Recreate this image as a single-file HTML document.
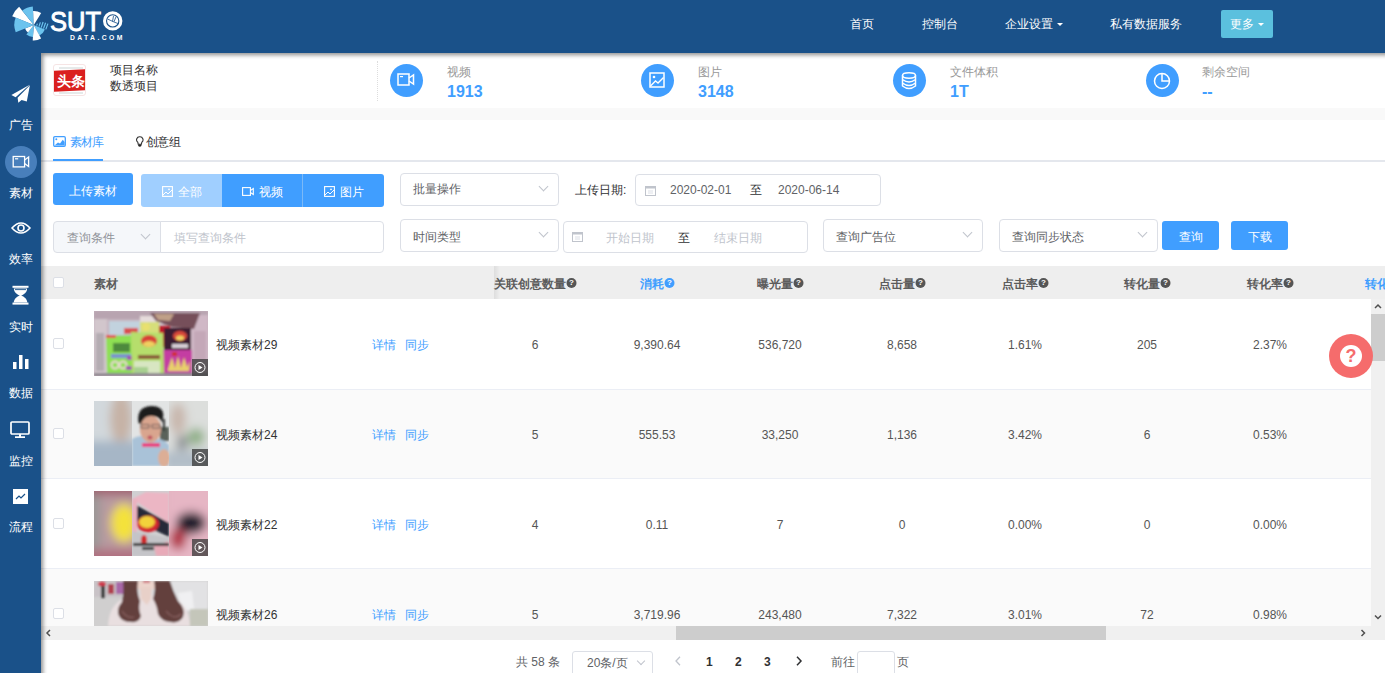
<!DOCTYPE html>
<html><head><meta charset="utf-8">
<style>
*{margin:0;padding:0;box-sizing:border-box}
html,body{width:1385px;height:673px;overflow:hidden;background:#fff;font-family:"Liberation Sans",sans-serif;font-size:12px;color:#606266}
.abs{position:absolute}
#hdr{position:absolute;left:0;top:0;width:1385px;height:53px;background:#1a5189;z-index:5}
#side{position:absolute;left:0;top:53px;width:41px;height:620px;background:#1a5189;z-index:4}
#shade{position:absolute;left:41px;top:53px;width:1364px;height:640px;z-index:20;pointer-events:none;box-shadow:inset 2px 2px 4px rgba(0,0,0,.45)}
.nav{position:absolute;top:16px;color:#fff;font-size:12px;line-height:16px;white-space:nowrap}
.caret{display:inline-block;width:0;height:0;border-left:3px solid transparent;border-right:3px solid transparent;border-top:3px solid #fff;vertical-align:middle;margin-left:4px}
.sitem{position:absolute;left:0;width:41px;text-align:center;color:#fff;font-size:12px;line-height:14px}
.txt{position:absolute;white-space:nowrap;line-height:14px}
.circ{position:absolute;width:33px;height:33px;border-radius:50%;background:#409eff}
.stl{position:absolute;color:#999;font-size:12px;line-height:14px;white-space:nowrap}
.stv{position:absolute;margin-top:1px;color:#409eff;font-size:16px;font-weight:bold;line-height:18px;white-space:nowrap}
.btn{position:absolute;background:#409eff;color:#fff;text-align:center;white-space:nowrap;font-size:12px}
.sel{position:absolute;border:1px solid #dcdfe6;border-radius:4px;background:#fff;color:#606266;white-space:nowrap}
.sel .t{position:absolute;left:12px;top:8px;line-height:14px}
.arr{position:absolute;width:7px;height:7px;border-right:1px solid #c0c4cc;border-bottom:1px solid #c0c4cc;transform:rotate(45deg)}
.th{position:absolute;top:277px;font-weight:bold;color:#5c5c5c;line-height:14px;white-space:nowrap;transform:translateX(-50%)}
.q{display:inline-block;width:10px;height:10px;border-radius:50%;background:#555;color:#fff;font-size:8px;line-height:10px;text-align:center;vertical-align:top;margin-top:1px;margin-left:1px;font-weight:bold}
.td{position:absolute;color:#555;line-height:14px;white-space:nowrap;transform:translateX(-50%)}
.cb{position:absolute;left:53px;width:11px;height:11px;border:1px solid #dcdfe6;border-radius:2px;background:#fff}
.link{position:absolute;color:#409eff;line-height:14px;white-space:nowrap}
.name{position:absolute;left:216px;color:#333;line-height:14px;white-space:nowrap}
.play{position:absolute;width:16px;height:17px;background:rgba(60,60,60,.75)}
.play:after{content:"";position:absolute;left:3px;top:3px;width:9px;height:9px;border:1px solid #fff;border-radius:50%}
.play:before{content:"";position:absolute;left:7px;top:5.5px;border-left:4px solid #fff;border-top:3px solid transparent;border-bottom:3px solid transparent;z-index:1}
.thumb{position:absolute;width:114px;height:65px;overflow:hidden}
.thumb svg{display:block}
</style></head><body>
<div id="hdr">
  <svg class="abs" style="left:8px;top:4px" width="120" height="40" viewBox="0 0 120 40">
    <path d="M25.8 20.9 L4.2 12.2 A23.3 23.3 0 0 1 11.1 2.8 Z" fill="#fff"/>
    <path d="M25.8 20.9 L14.2 6.5 A18.5 18.5 0 0 1 24.8 2.4 Z" fill="#6cc3ee"/>
    <path d="M25.8 20.9 L25.1 6.9 A14 14 0 0 1 33.2 9.0 Z" fill="#fff"/>
    <path d="M25.8 20.9 L36.9 25.4 A12 12 0 0 1 31.4 31.5 Z" fill="#6cc3ee"/>
    <path d="M25.8 20.9 L33.1 34.6 A15.5 15.5 0 0 1 24.7 36.4 Z" fill="#fff"/>
    <path d="M25.8 20.9 L25.0 32.9 A12 12 0 0 1 18.4 30.4 Z" fill="#6cc3ee"/>
    <path d="M25.8 20.9 L20.0 28.4 A9.5 9.5 0 0 1 17.0 24.5 Z" fill="#fff"/>
    <path d="M25.8 20.9 L7.7 28.2 A19.5 19.5 0 0 1 7.7 13.6 Z" fill="#6cc3ee"/>
    <path d="M28.6 21.6 L29.4 19.6 M30.9 22.6 L32.4 18.4 M33.2 23.6 L35.1 18 M35.5 24.6 L37.6 18.8 M37.8 25.4 L39.9 19.6" stroke="#6cc3ee" stroke-width="1.2"/>
    <text x="42" y="26.8" fill="#fff" stroke="#fff" stroke-width="0.9" font-family="Liberation Sans" font-size="27.5" textLength="51" lengthAdjust="spacingAndGlyphs">SUT</text>
    <circle cx="104.7" cy="16.9" r="8.2" fill="none" stroke="#fff" stroke-width="3"/>
    <circle cx="104.7" cy="16.9" r="5.6" fill="#fff"/>
    <path d="M99.5 15 L106 18 L110 19.5 M104.5 17.5 L105.5 12 M106 17.8 L108 12.8" stroke="#1a5189" stroke-width="0.8" fill="none"/>
    <text x="62" y="36.1" fill="#fff" font-family="Liberation Sans" font-size="6.8" font-weight="bold" textLength="52.3" lengthAdjust="spacing">DATA.COM</text>
  </svg>
  <div class="nav" style="left:850px">首页</div>
  <div class="nav" style="left:922px">控制台</div>
  <div class="nav" style="left:1005px">企业设置<span class="caret"></span></div>
  <div class="nav" style="left:1110px">私有数据服务</div>
  <div class="abs" style="left:1221px;top:10px;width:52px;height:28px;background:#5bc0de;border-radius:2px"></div>
  <div class="nav" style="left:1230px">更多<span class="caret"></span></div>
</div>
<div id="side">
  <svg class="abs" style="left:10px;top:31px" width="21" height="20" viewBox="0 0 21 20"><path d="M19.7 0.8 L1.4 11 L5.6 13.2 Z" fill="#fff"/><path d="M7.6 13.8 L19.9 1.2 L16.8 17.6 L11.6 16 L8.3 18.7 Z" fill="#fff"/></svg>
  <div class="sitem" style="top:65px">广告</div>
  <div class="abs" style="left:4.5px;top:93px;width:32px;height:32px;border-radius:50%;background:#487fbb"></div>
  <svg class="abs" style="left:12px;top:102px" width="18" height="13" viewBox="0 0 18 13"><rect x="1.2" y="1.5" width="11.4" height="10.4" fill="none" stroke="#fff" stroke-width="1.3"/><path d="M12.6 5 L16.6 2 L16.6 11.4 L12.6 8.4" fill="none" stroke="#fff" stroke-width="1.3"/><rect x="3" y="3.2" width="3.2" height="1.2" fill="#fff"/></svg>
  <div class="sitem" style="top:133px">素材</div>
  <svg class="abs" style="left:11px;top:168px" width="20" height="14" viewBox="0 0 20 14"><path d="M1 7 Q10 -3 19 7 Q10 17 1 7 Z" fill="none" stroke="#fff" stroke-width="1.6"/><circle cx="10" cy="7" r="3" fill="none" stroke="#fff" stroke-width="1.6"/></svg>
  <div class="sitem" style="top:199px">效率</div>
  <svg class="abs" style="left:12px;top:232px" width="17" height="20" viewBox="0 0 17 20"><rect x="0.5" y="0.8" width="16" height="2" fill="#fff"/><rect x="0.5" y="17.6" width="16" height="2" fill="#fff"/><path d="M1.8 3.6 L15.2 3.6 Q15 8.5 8.5 11.2 Q2 8.5 1.8 3.6 Z" fill="#fff"/><path d="M8.5 10.2 Q2 12.5 1.6 17.6 L15.4 17.6 Q15 12.5 8.5 10.2 Z" fill="#fff"/><path d="M3 4.6 L14 4.6" stroke="#1a5189" stroke-width="0.9"/></svg>
  <div class="sitem" style="top:267px">实时</div>
  <svg class="abs" style="left:13px;top:302px" width="16" height="14" viewBox="0 0 16 14"><rect x="0" y="7" width="3.5" height="7" fill="#fff"/><rect x="6" y="0" width="3.5" height="14" fill="#fff"/><rect x="12" y="4" width="3.5" height="10" fill="#fff"/></svg>
  <div class="sitem" style="top:333px">数据</div>
  <svg class="abs" style="left:10px;top:368px" width="20" height="17" viewBox="0 0 20 17"><rect x="1" y="1" width="18" height="12" rx="1" fill="none" stroke="#fff" stroke-width="1.7"/><rect x="9" y="13" width="2" height="3" fill="#fff"/><rect x="5" y="15.3" width="10" height="1.7" fill="#fff"/></svg>
  <div class="sitem" style="top:401px">监控</div>
  <svg class="abs" style="left:13px;top:436px" width="15" height="15" viewBox="0 0 15 15"><rect x="0" y="0" width="15" height="15" fill="#fff"/><path d="M3 10 L6 7 L8 9 L12 5" fill="none" stroke="#1a5189" stroke-width="1.2"/></svg>
  <div class="sitem" style="top:467px">流程</div>
</div>

<!-- info bar -->
<div class="abs" style="left:53px;top:64px;width:33px;height:32px;border:1px solid #f6e4e4;border-radius:3px;background:#fff;overflow:hidden">
  <div class="abs" style="left:5px;top:2px;width:24px;height:2px;background:#e6eaea"></div>
  <div class="abs" style="left:-1px;top:5px;width:35px;height:21px;background:#da1f1f;transform:skewY(-2.5deg)"></div>
  <div class="abs" style="left:2px;top:8px;width:29px;color:#fff;font-weight:bold;font-size:14px;line-height:16px;text-align:center;letter-spacing:-0.5px">头条</div>
  <div class="abs" style="left:5px;top:27px;width:24px;height:2px;background:#e6eaea"></div>
</div>
<div class="txt" style="left:110px;top:63px;color:#333">项目名称</div>
<div class="txt" style="left:110px;top:79px;color:#333">数透项目</div>
<div class="abs" style="left:377px;top:61px;height:40px;border-left:1px dotted #ddd"></div>

<div class="circ" style="left:389.5px;top:63.8px"></div>
<svg class="abs" style="left:397px;top:73px" width="18" height="13" viewBox="0 0 18 13"><rect x="1" y="1" width="11" height="11" fill="none" stroke="#fff" stroke-width="1.5"/><path d="M12 5 L16.5 2 L16.5 11 L12 8" fill="none" stroke="#fff" stroke-width="1.5"/><rect x="3" y="3" width="3" height="1.2" fill="#fff"/></svg>
<div class="stl" style="left:447px;top:65px">视频</div>
<div class="stv" style="left:447px;top:82px">1913</div>

<div class="circ" style="left:641px;top:64px"></div>
<svg class="abs" style="left:649px;top:72px" width="16" height="16" viewBox="0 0 16 16"><rect x="1" y="1" width="14" height="14" fill="none" stroke="#fff" stroke-width="1.5"/><circle cx="5" cy="5" r="1.3" fill="#fff"/><path d="M1.5 14 L6.5 9 L9 11 L14.5 5.5" fill="none" stroke="#fff" stroke-width="1.4"/></svg>
<div class="stl" style="left:698px;top:65px">图片</div>
<div class="stv" style="left:698px;top:82px">3148</div>

<div class="circ" style="left:893px;top:64px"></div>
<svg class="abs" style="left:901px;top:72px" width="16" height="18" viewBox="0 0 16 18"><ellipse cx="8" cy="3.5" rx="6.5" ry="2.7" fill="none" stroke="#fff" stroke-width="1.5"/><path d="M1.5 3.5 V14 Q8 19 14.5 14 V3.5 M1.5 7.5 Q8 12.5 14.5 7.5 M1.5 11 Q8 16 14.5 11" fill="none" stroke="#fff" stroke-width="1.5"/></svg>
<div class="stl" style="left:950px;top:65px">文件体积</div>
<div class="stv" style="left:950px;top:82px">1T</div>

<div class="circ" style="left:1145.5px;top:64px"></div>
<svg class="abs" style="left:1153px;top:72px" width="18" height="18" viewBox="0 0 18 18"><circle cx="9" cy="9" r="7.5" fill="none" stroke="#fff" stroke-width="1.5"/><path d="M9 2 V9 H16" fill="none" stroke="#fff" stroke-width="1.5"/></svg>
<div class="stl" style="left:1202px;top:65px">剩余空间</div>
<div class="stv" style="left:1202px;top:82px">--</div>

<div class="abs" style="left:41px;top:108px;width:1344px;height:12px;background:#f9f9f9"></div>

<!-- tabs -->
<div class="abs" style="left:41px;top:160px;width:1344px;height:2px;background:#e4e7ed"></div>
<div class="abs" style="left:53px;top:159px;width:50px;height:2px;background:#409eff"></div>
<svg class="abs" style="left:53px;top:136px" width="13" height="11" viewBox="0 0 13 11"><rect x="0.7" y="0.7" width="11.6" height="9.6" rx="1.2" fill="none" stroke="#409eff" stroke-width="1.3"/><circle cx="3.3" cy="3.3" r="1" fill="#409eff"/><path d="M1.5 9.6 L5 6.5 L7 7.5 L9.8 3.8 L11.6 6 L11.6 9.6 Z" fill="#409eff"/></svg>
<div class="txt" style="left:69.5px;top:135px;color:#409eff;letter-spacing:-0.6px">素材库</div>
<svg class="abs" style="left:135.5px;top:136px" width="8" height="12" viewBox="0 0 8 12"><path d="M3.8 0.8 A3 3 0 0 1 5.8 6.2 L5.4 8.2 H2.2 L1.8 6.2 A3 3 0 0 1 3.8 0.8 Z" fill="none" stroke="#333" stroke-width="1.1"/><path d="M2.2 8.6 H5.4 V10 Q3.8 11.6 2.2 10 Z" fill="#222"/></svg>
<div class="txt" style="left:146px;top:135px;color:#303133;letter-spacing:-0.6px">创意组</div>

<!-- toolbar row 1 -->
<div class="btn" style="left:53px;top:173px;width:80px;height:32px;border-radius:3px;line-height:36px">上传素材</div>
<div class="btn" style="left:141px;top:174px;width:81px;height:33px;line-height:37px;background:#a0cfff;border-radius:3px 0 0 3px"><svg width="11" height="11" viewBox="0 0 11 11" style="vertical-align:-1px;margin-right:5px"><rect x=".6" y=".6" width="9.8" height="9.8" fill="none" stroke="#fff" stroke-width="1.1"/><path d="M1 9 L4 6 L6 8 L10 4" fill="none" stroke="#fff" stroke-width="1"/><circle cx="7" cy="3.3" r=".9" fill="#fff"/></svg>全部</div>
<div class="btn" style="left:222px;top:174px;width:81px;height:33px;line-height:37px;border-right:1px solid #7bb9f7"><svg width="12" height="9" viewBox="0 0 12 9" style="vertical-align:0;margin-right:5px"><rect x=".6" y=".6" width="7.8" height="7.8" fill="none" stroke="#fff" stroke-width="1.1"/><path d="M8.4 3.5 L11.3 1.5 V7.5 L8.4 5.5" fill="none" stroke="#fff" stroke-width="1.1"/></svg>视频</div>
<div class="btn" style="left:303px;top:174px;width:81px;height:33px;line-height:37px;border-radius:0 3px 3px 0"><svg width="11" height="11" viewBox="0 0 11 11" style="vertical-align:-1px;margin-right:5px"><rect x=".6" y=".6" width="9.8" height="9.8" fill="none" stroke="#fff" stroke-width="1.1"/><path d="M1 9 L4 6 L6 8 L10 4" fill="none" stroke="#fff" stroke-width="1"/><circle cx="7" cy="3.3" r=".9" fill="#fff"/></svg>图片</div>

<div class="sel" style="left:400px;top:173px;width:159px;height:33px"><span class="t">批量操作</span><div class="arr" style="left:139px;top:9px"></div></div>
<div class="txt" style="left:575px;top:183px;color:#303133">上传日期:</div>
<div class="sel" style="left:635px;top:174px;width:246px;height:32px">
  <svg class="abs" style="left:9px;top:10px" width="11" height="11" viewBox="0 0 11 11"><rect x=".5" y="1.5" width="10" height="9" fill="none" stroke="#c0c4cc" stroke-width="1"/><rect x=".5" y="1.5" width="10" height="2" fill="#c0c4cc"/><path d="M3 6 H8 M3 8 H8" stroke="#dcdfe6" stroke-width="1"/></svg>
  <span class="t" style="left:34px">2020-02-01</span>
  <span class="t" style="left:114px;color:#303133">至</span>
  <span class="t" style="left:142px">2020-06-14</span>
</div>

<!-- toolbar row 2 -->
<div class="sel" style="left:53px;top:221px;width:108px;height:32px;background:#f5f7fa;border-radius:4px 0 0 4px"><span class="t" style="left:13px;top:9px;color:#909399">查询条件</span><div class="arr" style="left:88px;top:9px"></div></div>
<div class="sel" style="left:160px;top:221px;width:224px;height:32px;border-radius:0 4px 4px 0"><span class="t" style="left:13px;top:9px;color:#c0c4cc">填写查询条件</span></div>
<div class="sel" style="left:400px;top:219px;width:159px;height:33px"><span class="t" style="top:10px">时间类型</span><div class="arr" style="left:139px;top:9px"></div></div>
<div class="sel" style="left:563px;top:221px;width:245px;height:32px">
  <svg class="abs" style="left:8px;top:9px" width="11" height="11" viewBox="0 0 11 11"><rect x=".5" y="1.5" width="10" height="9" fill="none" stroke="#c0c4cc" stroke-width="1"/><rect x=".5" y="1.5" width="10" height="2" fill="#c0c4cc"/><path d="M3 6 H8 M3 8 H8" stroke="#dcdfe6" stroke-width="1"/></svg>
  <span class="t" style="left:42px;top:9px;color:#c0c4cc">开始日期</span>
  <span class="t" style="left:114px;top:9px;color:#303133">至</span>
  <span class="t" style="left:150px;top:9px;color:#c0c4cc">结束日期</span>
</div>
<div class="sel" style="left:823px;top:219px;width:160px;height:33px"><span class="t" style="top:10px">查询广告位</span><div class="arr" style="left:140px;top:9px"></div></div>
<div class="sel" style="left:999px;top:219px;width:159px;height:33px"><span class="t" style="top:10px">查询同步状态</span><div class="arr" style="left:139px;top:9px"></div></div>
<div class="btn" style="left:1162px;top:221px;width:57px;height:29px;line-height:33px;border-radius:3px">查询</div>
<div class="btn" style="left:1231px;top:221px;width:57px;height:29px;line-height:33px;border-radius:3px">下载</div>

<!-- table -->
<div class="abs" style="left:41px;top:266px;width:1344px;height:33px;background:#eeeeee"></div>
<div class="abs" style="left:41px;top:389px;width:1330px;height:89px;background:#fafafa"></div>
<div class="abs" style="left:41px;top:568px;width:1330px;height:58px;background:#fafafa"></div>
<div class="abs" style="left:41px;top:389px;width:1330px;height:1px;background:#ebeef5"></div>
<div class="abs" style="left:41px;top:478px;width:1330px;height:1px;background:#ebeef5"></div>
<div class="abs" style="left:41px;top:568px;width:1330px;height:1px;background:#ebeef5"></div>
<div class="abs" style="left:494px;top:266px;width:6px;height:33px;background:linear-gradient(to right,rgba(0,0,0,.07),rgba(0,0,0,0))"></div>

<div class="cb" style="top:277px"></div>
<div class="txt" style="left:94px;top:277px;font-weight:bold;color:#5c5c5c">素材</div>
<div class="th" style="left:535px">关联创意数量<span class="q">?</span></div>
<div class="th" style="left:657px;color:#409eff">消耗<span class="q" style="background:#409eff">?</span></div>
<div class="th" style="left:780px">曝光量<span class="q">?</span></div>
<div class="th" style="left:902px">点击量<span class="q">?</span></div>
<div class="th" style="left:1025px">点击率<span class="q">?</span></div>
<div class="th" style="left:1147px">转化量<span class="q">?</span></div>
<div class="th" style="left:1270px">转化率<span class="q">?</span></div>
<div class="txt" style="left:1365px;top:277px;font-weight:bold;color:#409eff">转化成本</div>

<!-- rows -->
<div id="rows">
<div class="cb" style="top:338px"></div>
<div class="thumb" id="th0" style="left:94px;top:311px"><svg width="114" height="65" viewBox="0 0 114 65"><defs><filter id="b1" x="-20%" y="-20%" width="140%" height="140%"><feGaussianBlur stdDeviation="0.8"/></filter><filter id="b4" x="-50%" y="-50%" width="200%" height="200%"><feGaussianBlur stdDeviation="5"/></filter><clipPath id="cl"><rect x="0" y="0" width="38" height="65"/></clipPath><clipPath id="cr"><rect x="75" y="0" width="39" height="65"/></clipPath><clipPath id="cm"><rect x="38" y="0" width="37" height="65"/></clipPath></defs>
<rect width="114" height="65" fill="#c6b3be"/>
<g filter="url(#b1)">
<rect x="0" y="0" width="114" height="8" fill="#b8a4b0"/>
<rect x="0" y="8" width="13" height="55" fill="#d2c6cc"/>
<rect x="2" y="22" width="8" height="38" fill="#b4acb2"/>
<rect x="97" y="4" width="17" height="58" fill="#d0b8c6"/>
<rect x="100" y="20" width="12" height="30" fill="#c4a8b8"/>
<rect x="46" y="5" width="34" height="8" fill="#e6dcdc"/>
<path d="M56 2 L106 2 L100 18 L78 16 L62 10 Z" fill="#76505a"/>
<path d="M60 3 L80 3 L76 10 L64 9 Z" fill="#c0a088"/>
<rect x="15" y="10" width="31" height="14" fill="#c2d2de"/>
<rect x="30" y="17" width="14" height="6" fill="#d85050"/>
<rect x="46" y="11" width="19" height="12" fill="#d6de7a"/>
<circle cx="52" cy="16" r="4" fill="#e8e070"/>
<rect x="65" y="15" width="11" height="21" fill="#c01f2a"/>
<rect x="70" y="17" width="27" height="24" fill="#3a1a30"/>
<ellipse cx="86" cy="25" rx="7" ry="5" fill="#d8483a"/>
<ellipse cx="86" cy="27" rx="4" ry="2.5" fill="#f0d460"/>
<rect x="78" y="33" width="16" height="4" fill="#d8d0d8"/>
<rect x="66" y="39" width="32" height="23" fill="#c43ea2"/>
<path d="M74 58 L78 46 L81 57 L84 45 L87 57 L90 46 L93 56 L96 50 L95 60 L74 60 Z" fill="#e8d06a"/>
<rect x="78" y="41" width="5" height="4" fill="#d03030"/>
<path d="M12 25 L41 24 L42 62 L13 62 Z" fill="#8ee052"/>
<rect x="12" y="24" width="10" height="3" fill="#e05050"/>
<rect x="19" y="32" width="17" height="9" fill="#4e8a3c"/>
<rect x="17" y="43" width="20" height="4" fill="#7a90d0"/>
<circle cx="21" cy="54" r="3.5" fill="none" stroke="#e8d8d0" stroke-width="2"/>
<circle cx="29" cy="54" r="3.5" fill="none" stroke="#e8d8d0" stroke-width="2"/>
<rect x="33" y="45" width="6" height="4" fill="#a050b0"/>
<rect x="32" y="55" width="7" height="4" fill="#a050b0"/>
<path d="M37 21 L69 22 L70 63 L38 63 Z" fill="#b6de6c"/>
<ellipse cx="55" cy="30" rx="8" ry="6" fill="#d84038"/>
<ellipse cx="55" cy="33" rx="6" ry="3" fill="#f0d060"/>
<rect x="44" y="44" width="22" height="4" fill="#8a5c3a"/>
<rect x="40" y="50" width="26" height="12" fill="#d8e6c2"/>
<rect x="40" y="56" width="14" height="6" fill="#a8d090"/>
<rect x="0" y="62" width="114" height="3" fill="#8e8890"/>
</g>
<g><rect x="98" y="48" width="16" height="17" fill="#3c3c3c" opacity=".78"/><circle cx="106" cy="56.5" r="5" fill="none" stroke="#fff" stroke-width="1"/><path d="M104.5 54 L108.5 56.5 L104.5 59 Z" fill="#fff"/></g></svg></div><!--/th-->
<div class="name" style="top:338px">视频素材29</div>
<div class="link" style="left:372px;top:338px">详情</div>
<div class="link" style="left:405px;top:338px">同步</div>
<div class="td" style="left:535px;top:338px">6</div>
<div class="td" style="left:657px;top:338px">9,390.64</div>
<div class="td" style="left:780px;top:338px">536,720</div>
<div class="td" style="left:902px;top:338px">8,658</div>
<div class="td" style="left:1025px;top:338px">1.61%</div>
<div class="td" style="left:1147px;top:338px">205</div>
<div class="td" style="left:1270px;top:338px">2.37%</div>
<div class="cb" style="top:428px"></div>
<div class="thumb" id="th1" style="left:94px;top:401px"><svg width="114" height="65" viewBox="0 0 114 65"><defs><filter id="b1" x="-20%" y="-20%" width="140%" height="140%"><feGaussianBlur stdDeviation="0.8"/></filter><filter id="b4" x="-50%" y="-50%" width="200%" height="200%"><feGaussianBlur stdDeviation="5"/></filter><clipPath id="cl"><rect x="0" y="0" width="38" height="65"/></clipPath><clipPath id="cr"><rect x="75" y="0" width="39" height="65"/></clipPath><clipPath id="cm"><rect x="38" y="0" width="37" height="65"/></clipPath></defs>
<rect width="114" height="65" fill="#d4dade"/>
<g clip-path="url(#cl)"><g filter="url(#b4)">
<rect x="-10" y="-10" width="60" height="90" fill="#d2d8dc"/>
<ellipse cx="27" cy="18" rx="11" ry="26" fill="#c6b2a6"/>
<rect x="-10" y="40" width="60" height="40" fill="#a6b6c6"/>
</g></g>
<g clip-path="url(#cm)">
<rect x="38" y="0" width="37" height="65" fill="#e2e4e4"/>
<g filter="url(#b1)">
<rect x="66" y="26" width="9" height="14" fill="#5a625a"/>
<rect x="69" y="18" width="2" height="12" fill="#303030"/>
<path d="M38 38 Q48 32 56 38 Q68 36 75 44 L75 65 L38 65 Z" fill="#a9c2d8"/>
<ellipse cx="56.5" cy="28" rx="10.5" ry="13.5" fill="#d9a58e"/>
<path d="M44.5 22 Q42 6 57 5 Q71 5 69 17 L68 22 Q66 15 58 15 Q50 14 47 23 Z" fill="#1c1c1c"/>
<path d="M47 23.5 L55 23.5 L55 27 L47 27 Z M58 23.5 L66 23.5 L66 27 L58 27 Z" fill="none" stroke="#6a5a58" stroke-width="1"/>
<ellipse cx="56" cy="36.5" rx="2.5" ry="2" fill="#c05060"/>
<rect x="48" y="42" width="18" height="4" fill="#e84080"/>
<ellipse cx="70" cy="57" rx="6" ry="9" fill="#dcae96"/>
</g></g>
<g clip-path="url(#cr)"><g filter="url(#b4)">
<rect x="70" y="-10" width="60" height="90" fill="#dcdedc"/>
<ellipse cx="84" cy="18" rx="8" ry="16" fill="#c8b6ac"/>
<ellipse cx="102" cy="36" rx="9" ry="9" fill="#90b088"/>
<ellipse cx="88" cy="42" rx="6" ry="8" fill="#8c9094"/>
<rect x="70" y="50" width="60" height="20" fill="#b2bec8"/>
</g></g>
<g><rect x="98" y="48" width="16" height="17" fill="#3c3c3c" opacity=".78"/><circle cx="106" cy="56.5" r="5" fill="none" stroke="#fff" stroke-width="1"/><path d="M104.5 54 L108.5 56.5 L104.5 59 Z" fill="#fff"/></g></svg></div><!--/th-->
<div class="name" style="top:428px">视频素材24</div>
<div class="link" style="left:372px;top:428px">详情</div>
<div class="link" style="left:405px;top:428px">同步</div>
<div class="td" style="left:535px;top:428px">5</div>
<div class="td" style="left:657px;top:428px">555.53</div>
<div class="td" style="left:780px;top:428px">33,250</div>
<div class="td" style="left:902px;top:428px">1,136</div>
<div class="td" style="left:1025px;top:428px">3.42%</div>
<div class="td" style="left:1147px;top:428px">6</div>
<div class="td" style="left:1270px;top:428px">0.53%</div>
<div class="cb" style="top:518px"></div>
<div class="thumb" id="th2" style="left:94px;top:491px"><svg width="114" height="65" viewBox="0 0 114 65"><defs><filter id="b1" x="-20%" y="-20%" width="140%" height="140%"><feGaussianBlur stdDeviation="0.8"/></filter><filter id="b4" x="-50%" y="-50%" width="200%" height="200%"><feGaussianBlur stdDeviation="5"/></filter><clipPath id="cl"><rect x="0" y="0" width="38" height="65"/></clipPath><clipPath id="cr"><rect x="75" y="0" width="39" height="65"/></clipPath><clipPath id="cm"><rect x="38" y="0" width="37" height="65"/></clipPath></defs>
<rect width="114" height="65" fill="#d9a6b0"/>
<g clip-path="url(#cl)"><g filter="url(#b4)">
<rect x="-10" y="-10" width="60" height="90" fill="#b89aa0"/>
<rect x="-10" y="-10" width="16" height="90" fill="#9a9896"/>
<ellipse cx="30" cy="32" rx="13" ry="19" fill="#f4e23a"/>
<rect x="-10" y="-10" width="60" height="14" fill="#a06070"/>
<rect x="-10" y="58" width="60" height="20" fill="#b07080"/>
</g></g>
<g clip-path="url(#cm)">
<rect x="38" y="0" width="37" height="65" fill="#d0d0d2"/>
<g filter="url(#b1)">
<path d="M38 8 L52 1 L75 2 L75 32 Z" fill="#ecb6c4"/>
<path d="M42 14 L75 32 L75 46 L42 30 Z" fill="#252a38"/>
<rect x="38" y="8" width="5" height="57" fill="#eab2c0"/>
<path d="M38 40 L75 47 L75 65 L38 65 Z" fill="#c4c4c8"/>
<path d="M60 55 L75 50 L75 65 L62 65 Z" fill="#e8aab8"/>
<ellipse cx="54" cy="33" rx="11" ry="8.5" fill="#d42830"/>
<ellipse cx="53" cy="31" rx="8" ry="6" fill="#f2d23a"/>
<ellipse cx="50" cy="49" rx="3" ry="5" fill="#d02a2a"/>
<rect x="39" y="52" width="36" height="3" fill="#333"/>
<rect x="48" y="56" width="12" height="3" fill="#333"/>
</g></g>
<g clip-path="url(#cr)"><g filter="url(#b4)">
<rect x="70" y="-10" width="60" height="90" fill="#e6b6c4"/>
<ellipse cx="97" cy="32" rx="15" ry="11" fill="#1a1c2a"/>
<ellipse cx="84" cy="48" rx="8" ry="11" fill="#b02c3c"/>
</g></g>
<g><rect x="98" y="48" width="16" height="17" fill="#3c3c3c" opacity=".78"/><circle cx="106" cy="56.5" r="5" fill="none" stroke="#fff" stroke-width="1"/><path d="M104.5 54 L108.5 56.5 L104.5 59 Z" fill="#fff"/></g></svg></div><!--/th-->
<div class="name" style="top:518px">视频素材22</div>
<div class="link" style="left:372px;top:518px">详情</div>
<div class="link" style="left:405px;top:518px">同步</div>
<div class="td" style="left:535px;top:518px">4</div>
<div class="td" style="left:657px;top:518px">0.11</div>
<div class="td" style="left:780px;top:518px">7</div>
<div class="td" style="left:902px;top:518px">0</div>
<div class="td" style="left:1025px;top:518px">0.00%</div>
<div class="td" style="left:1147px;top:518px">0</div>
<div class="td" style="left:1270px;top:518px">0.00%</div>
<div class="cb" style="top:608px"></div>
<div class="thumb" id="th3" style="left:94px;top:581px"><svg width="114" height="45" viewBox="0 0 114 45"><defs><filter id="b1" x="-20%" y="-20%" width="140%" height="140%"><feGaussianBlur stdDeviation="0.8"/></filter><filter id="b4" x="-50%" y="-50%" width="200%" height="200%"><feGaussianBlur stdDeviation="5"/></filter><clipPath id="cl"><rect x="0" y="0" width="38" height="65"/></clipPath><clipPath id="cr"><rect x="75" y="0" width="39" height="65"/></clipPath><clipPath id="cm"><rect x="38" y="0" width="37" height="65"/></clipPath></defs>
<rect width="114" height="45" fill="#d0cfcf"/>
<g filter="url(#b1)">
<rect x="0" y="0" width="114" height="15" fill="#dcdcde"/>
<rect x="74" y="0" width="40" height="30" fill="#e2e2e4"/>
<path d="M84 12 L98 10 L100 28 L88 30 Z" fill="#f0f0f2"/>
<rect x="0" y="0" width="32" height="16" fill="#c8c2c6"/>
<ellipse cx="8" cy="3" rx="4" ry="2.5" fill="#d03848"/>
<rect x="7" y="5" width="4" height="12" fill="#3a3a3a"/>
<rect x="14" y="3" width="6" height="10" fill="#b04050"/>
<rect x="22" y="1" width="9" height="12" fill="#a868a8"/>
<rect x="96" y="28" width="18" height="17" fill="#c4c6ba"/>
<path d="M14 45 Q15 24 30 17 L46 14 L58 14 L80 17 Q95 24 96 45 Z" fill="#e9dfe0"/>
<rect x="42" y="0" width="20" height="8" fill="#ecd4cc"/>
<path d="M46 6 L58 6 L57 18 L53 24 L47 18 Z" fill="#e8d0c8"/>
<rect x="49" y="0" width="7" height="1.6" fill="#c84858"/>
<path d="M29 0 L44 0 Q42 10 46 20 Q44 28 47 35 Q45 42 37 41 Q28 41 25 35 Q22 28 28 21 Q30 12 29 0 Z" fill="#64403e"/>
<path d="M60 0 L76 0 Q79 10 84 20 Q92 28 89 36 Q85 43 76 41 Q67 40 64 33 Q63 24 59 18 Q62 8 60 0 Z" fill="#64403e"/>
<path d="M28 30 Q33 38 40 36 M72 30 Q80 40 87 33" fill="none" stroke="#8a6462" stroke-width="1.2"/>
</g></svg></div><!--/th-->
<div class="name" style="top:608px">视频素材26</div>
<div class="link" style="left:372px;top:608px">详情</div>
<div class="link" style="left:405px;top:608px">同步</div>
<div class="td" style="left:535px;top:608px">5</div>
<div class="td" style="left:657px;top:608px">3,719.96</div>
<div class="td" style="left:780px;top:608px">243,480</div>
<div class="td" style="left:902px;top:608px">7,322</div>
<div class="td" style="left:1025px;top:608px">3.01%</div>
<div class="td" style="left:1147px;top:608px">72</div>
<div class="td" style="left:1270px;top:608px">0.98%</div>
</div><!--/rows-->

<!-- scrollbars -->
<div class="abs" style="left:41px;top:626px;width:1330px;height:14px;background:#f0f0f0;z-index:2"></div>
<div class="abs" style="left:676px;top:626px;width:430px;height:14px;background:#cdcdcd;z-index:2"></div>
<div class="abs" style="left:1371px;top:299px;width:14px;height:341px;background:#f0f0f0;z-index:2"></div>
<div class="abs" style="left:1371px;top:314px;width:14px;height:47px;background:#cdcdcd;z-index:2"></div>
<div class="abs" style="left:1329px;top:334px;width:44px;height:44px;border-radius:50%;background:#f56c6c;z-index:3"><div class="abs" style="left:11px;top:11px;width:22px;height:22px;border-radius:50%;background:#fff;color:#f56c6c;font-size:18px;font-weight:bold;line-height:23px;text-align:center;font-family:'Liberation Sans'">?</div></div>

<svg class="abs" style="left:1371px;top:299px;z-index:3" width="14" height="14" viewBox="0 0 14 14"><path d="M4 9 L7 6 L10 9" fill="none" stroke="#505050" stroke-width="1.5"/></svg>
<svg class="abs" style="left:1371px;top:610px;z-index:3" width="14" height="14" viewBox="0 0 14 14"><path d="M4 5.5 L7 8.5 L10 5.5" fill="none" stroke="#505050" stroke-width="1.5"/></svg>
<svg class="abs" style="left:41px;top:626px;z-index:3" width="14" height="14" viewBox="0 0 14 14"><path d="M9 4 L6 7 L9 10" fill="none" stroke="#505050" stroke-width="1.5"/></svg>
<svg class="abs" style="left:1356px;top:626px;z-index:3" width="14" height="14" viewBox="0 0 14 14"><path d="M5.5 4 L8.5 7 L5.5 10" fill="none" stroke="#505050" stroke-width="1.5"/></svg>
<!-- pagination -->
<div class="txt" style="left:516px;top:655px;color:#606266">共 58 条</div>
<div class="sel" style="left:572px;top:651px;width:81px;height:28px;border-radius:3px"><span class="t" style="left:14px;top:4px">20条/页</span><div class="arr" style="left:65px;top:6px;width:6px;height:6px"></div></div>
<svg class="abs" style="left:674px;top:656px" width="8" height="10" viewBox="0 0 8 10"><path d="M6 0.8 L2 5 L6 9.2" fill="none" stroke="#c0c4cc" stroke-width="1.3"/></svg>
<div class="txt" style="left:706px;top:655px;color:#303133;font-weight:bold">1</div>
<div class="txt" style="left:735px;top:655px;color:#303133;font-weight:bold">2</div>
<div class="txt" style="left:764px;top:655px;color:#303133;font-weight:bold">3</div>
<svg class="abs" style="left:795px;top:656px" width="8" height="10" viewBox="0 0 8 10"><path d="M2 0.8 L6 5 L2 9.2" fill="none" stroke="#303133" stroke-width="1.5"/></svg>
<div class="txt" style="left:831px;top:655px;color:#606266">前往</div>
<div class="sel" style="left:857px;top:651px;width:38px;height:28px;border-radius:3px"></div>
<div class="txt" style="left:897px;top:655px;color:#606266">页</div>
<div id="shade"></div>
</body></html>
